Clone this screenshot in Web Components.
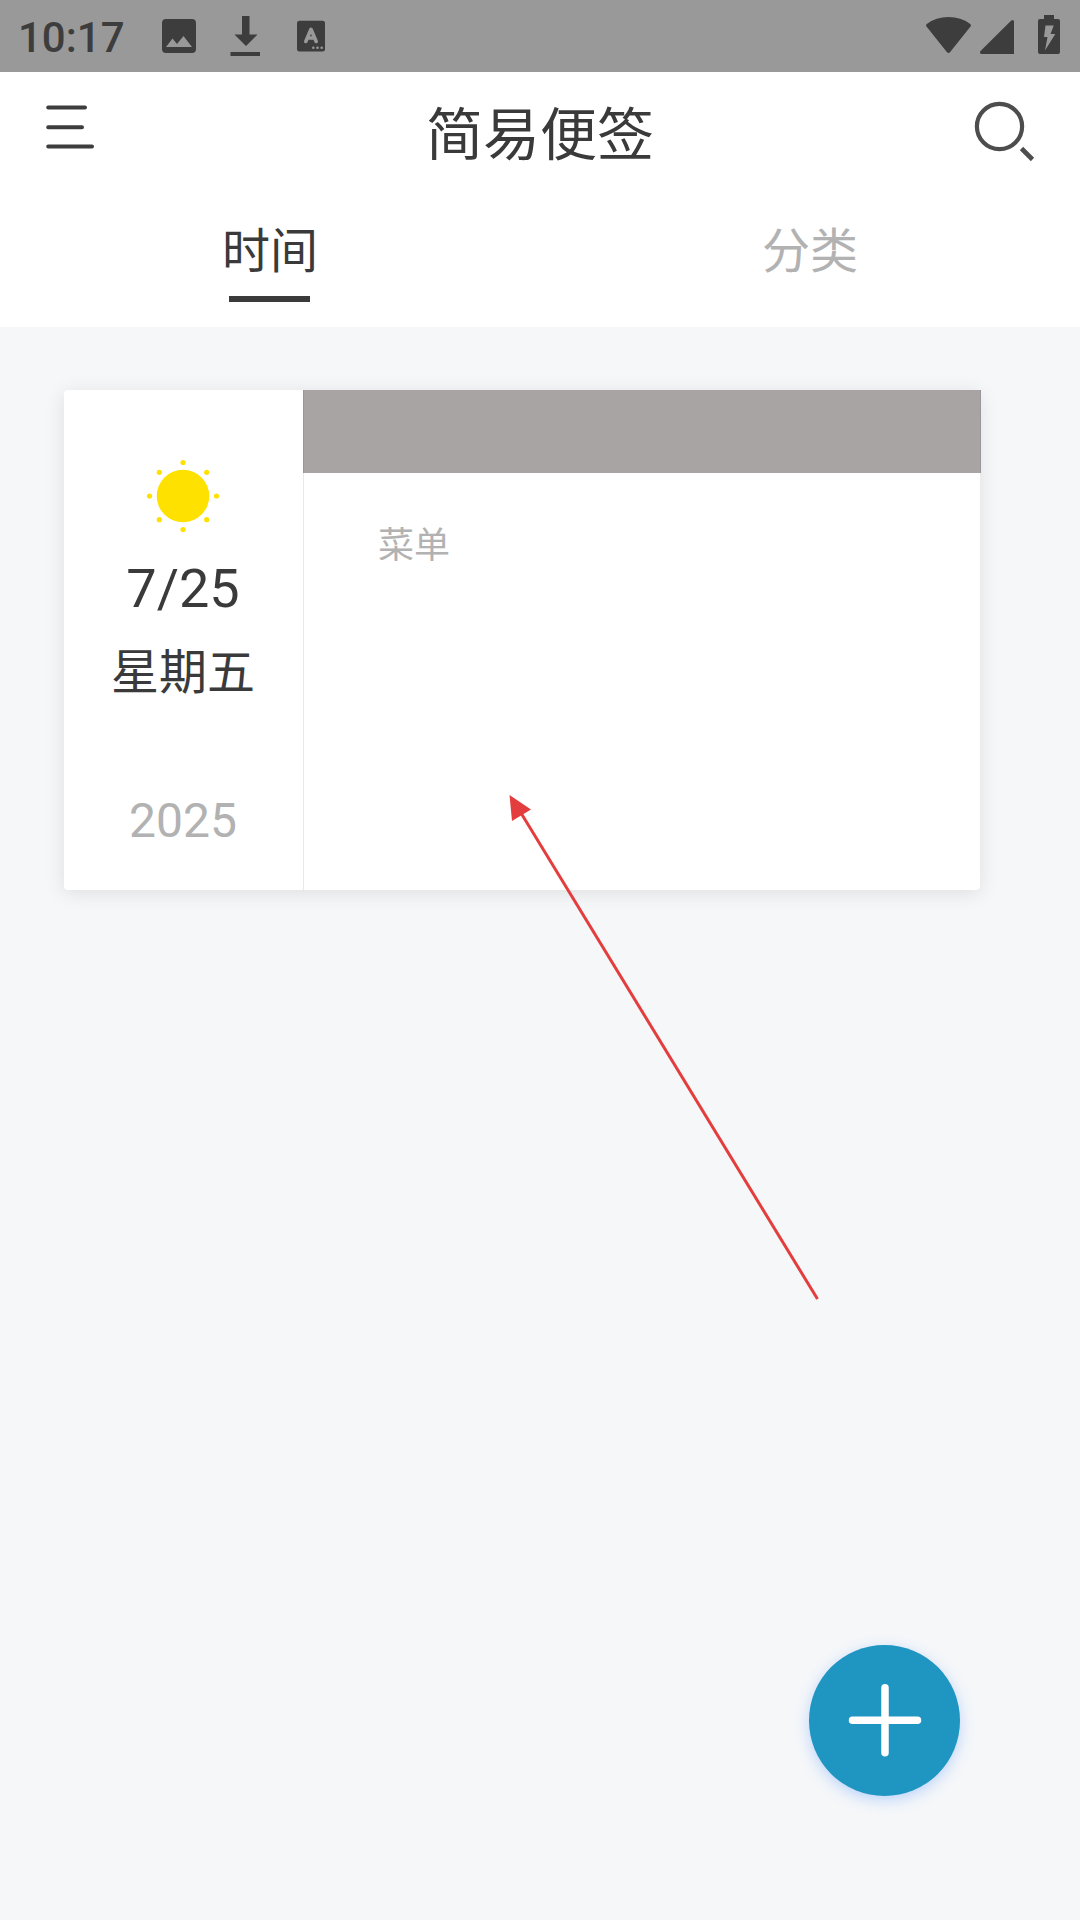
<!DOCTYPE html>
<html lang="zh-CN">
<head>
<meta charset="UTF-8">
<title>简易便签</title>
<style>
    html, body {
        margin: 0;
        padding: 0;
    }
    body {
        width: 1080px;
        height: 1920px;
        overflow: hidden;
        background: #f5f7f9;
        color: #3a3a3a;
        font-family: Roboto, 'Noto Sans CJK SC', sans-serif;
    }
</style>
</head>
<body>
<notes-app></notes-app>

<script>
class StatusBar extends HTMLElement {
    constructor() {
        super();
        this.attachShadow({ mode: 'open' });
        this.shadowRoot.innerHTML = `
        <style>
            :host {
                display: flex;
                justify-content: space-between;
                height: 72px;
                background: #999;
                color: #3d3d3d;
            }
            .left {
                display: flex;
                padding-left: 18px;
            }
            .time {
                width: 134px;
                font-size: 42px;
                font-weight: 500;
                line-height: 75px;
                white-space: nowrap;
            }
            svg {
                display: block;
                fill: #3d3d3d;
            }
        </style>
        <div class="left">
            <span class="time">${this.getAttribute('time')}</span>
            <svg width="188" height="72" viewBox="152 0 188 72">
                <path fill-rule="evenodd" d="M166 19h26a4 4 0 0 1 4 4v26a4 4 0 0 1-4 4h-26a4 4 0 0 1-4-4v-26a4 4 0 0 1 4-4zM166 47h26l-8.500-11-6.500 8-4.500-5.500z"/>
                <path d="M242 16h7.500v18.500h8L246 46l-11.500-11.500h7.500zM230.500 52h29.500v4h-29.500z"/>
                <rect x="297" y="20.700" width="28" height="30.700" rx="2.500"/>
                <path d="M305.800 41.500l5.200-12.200 5.200 12.200M307.500 38h7" fill="none" stroke="#999" stroke-width="3.600" stroke-linecap="round" stroke-linejoin="round"/>
                <g fill="#999"><circle cx="313.300" cy="47.700" r="1.300"/><circle cx="317.500" cy="47.700" r="1.300"/><circle cx="321.700" cy="47.700" r="1.300"/></g>
            </svg>
        </div>
        <svg width="160" height="72" viewBox="920 0 160 72">
            <path d="M926.500 26.500q-1.300-1.500.3-2.600Q936 17 948.500 17t21.700 6.900q1.600 1.100.3 2.600L950.200 52q-1.700 1.800-3.400 0z"/>
            <path d="M980.800 50.800l30.500-30.300q2.700-1.500 2.700 1.500v32h-32q-3.400-.2-1.200-3.200z"/>
            <path fill-rule="evenodd" d="M1044 15h10v4h4a2 2 0 0 1 2 2v31a2 2 0 0 1-2 2h-18a2 2 0 0 1-2-2v-31a2 2 0 0 1 2-2h4zM1045.500 25.500l-1.500 11.500h3.500l-2.500 13.500 10.300-16.500h-4.800l3.200-8.500z"/>
        </svg>
        `;
    }
}

class AppHeader extends HTMLElement {
    constructor() {
        super();
        this.attachShadow({ mode: 'open' });
        this.shadowRoot.innerHTML = `
        <style>
            :host {
                display: flex;
                justify-content: space-between;
                height: 120px;
                padding: 0 40px;
                background: #fff;
            }
            .title {
                font-size: 57px;
                line-height: 127px;
            }
            svg {
                display: block;
                fill: none;
                stroke: #3d3d3d;
                overflow: visible;
            }
        </style>
        <svg width="64" height="120" viewBox="40 72 64 120" stroke-width="4" stroke-linecap="round">
            <path d="M48.200 107.500h36.800M48.200 127.300h33.800M48.200 146.600h43.800"/>
        </svg>
        <span class="title"><slot></slot></span>
        <svg width="64" height="120" viewBox="976 72 64 120" stroke-width="4.200">
            <circle cx="999.500" cy="126.500" r="22.600" stroke="#4d4d4d"/>
            <path d="M1021.500 148.500l11 11" stroke="#4d4d4d" stroke-width="4.600"/>
        </svg>
        `;
    }
}

class TabItem extends HTMLElement {
    constructor() {
        super();
        this.attachShadow({ mode: 'open' });
        this.shadowRoot.innerHTML = `
        <style>
            :host {
                display: flex;
                flex: 1;
                flex-direction: column;
                align-items: center;
                color: #b2b2b2;
                font-size: 48px;
                line-height: 70px;
            }
            :host([active]) {
                color: #3a3a3a;
            }
            .line {
                width: 81px;
                height: 6px;
                margin: 9px 1px 0 0;
            }
            :host([active]) .line {
                background: #3a3a3a;
            }
        </style>
        <span><slot></slot></span>
        <div class="line"></div>
        `;
    }
}

class TabBar extends HTMLElement {
    constructor() {
        super();
        this.attachShadow({ mode: 'open' });
        this.shadowRoot.innerHTML = `
        <style>
            :host {
                display: flex;
                box-sizing: border-box;
                height: 135px;
                padding-top: 25px;
                background: #fff;
            }
        </style>
        <slot></slot>
        `;
    }
}

class NoteCard extends HTMLElement {
    constructor() {
        super();
        this.attachShadow({ mode: 'open' });
        this.shadowRoot.innerHTML = `
        <style>
            :host {
                display: flex;
                width: 916px;
                height: 500px;
                margin: 63px 0 0 64px;
                border-radius: 4px;
                background: #fff;
                box-shadow: 0 3px 20px rgba(0, 0, 0, 0.1);
            }
            .side {
                display: flex;
                box-sizing: border-box;
                flex-direction: column;
                align-items: center;
                width: 239px;
                padding-right: 1px;
            }
            .sun {
                display: block;
                margin-top: 69px;
                fill: #ffe100;
            }
            .date {
                margin-top: 24px;
                font-size: 54px;
                line-height: 64px;
            }
            .week {
                margin-top: 17px;
                font-size: 48px;
                line-height: 70px;
            }
            .year {
                margin-top: 85px;
                color: #b2b2b2;
                font-size: 48px;
                line-height: 56px;
            }
            .main {
                flex: 1;
                box-sizing: border-box;
                border-left: 1px solid #e8e8e8;
            }
            .band {
                height: 83px;
                margin: 0 -1px;
                background: #a8a4a3;
                box-shadow: inset 1px 0 #999799, inset -1px 0 #999799;
            }
            .text {
                padding: 47px 0 0 74px;
                color: #b2b2b2;
                font-size: 36px;
                line-height: 52px;
            }
        </style>
        <div class="side">
            <svg class="sun" width="74" height="74" viewBox="-37 -37 74 74">
                <circle r="26.300"/>
                <circle cy="-33.500" r="2.600"/><circle cy="33.500" r="2.600"/>
                <circle cx="-33.500" r="2.600"/><circle cx="33.500" r="2.600"/>
                <circle cx="-23.700" cy="-23.700" r="2.600"/><circle cx="23.700" cy="-23.700" r="2.600"/>
                <circle cx="-23.700" cy="23.700" r="2.600"/><circle cx="23.700" cy="23.700" r="2.600"/>
            </svg>
            <div class="date">${this.getAttribute('date')}</div>
            <div class="week">${this.getAttribute('week')}</div>
            <div class="year">${this.getAttribute('year')}</div>
        </div>
        <div class="main">
            <div class="band"></div>
            <div class="text"><slot></slot></div>
        </div>
        `;
    }
}

class PointerArrow extends HTMLElement {
    constructor() {
        super();
        this.attachShadow({ mode: 'open' });
        this.shadowRoot.innerHTML = `
        <style>
            :host {
                position: absolute;
                left: 500px;
                top: 780px;
            }
            svg {
                display: block;
            }
        </style>
        <svg width="330" height="530" viewBox="500 780 330 530">
            <path d="M521 813L817.500 1299" stroke="#e33e3d" stroke-width="3"/>
            <path d="M509.500 795l21.500 14.500-19 11.500z" fill="#e33e3d"/>
        </svg>
        `;
    }
}

class AddButton extends HTMLElement {
    constructor() {
        super();
        this.attachShadow({ mode: 'open' });
        this.shadowRoot.innerHTML = `
        <style>
            :host {
                position: absolute;
                left: 809px;
                top: 1645px;
                width: 151px;
                height: 151px;
                border-radius: 50%;
                background: #1f95c1;
                box-shadow: 0 4px 14px rgba(80, 145, 255, 0.35);
            }
            svg {
                display: block;
            }
        </style>
        <svg width="151" height="151" viewBox="0 0 151 151">
            <path d="M43.500 75.200h65M76 42.800v65" stroke="#fff" stroke-width="7.500" stroke-linecap="round"/>
        </svg>
        `;
    }
}

class NotesApp extends HTMLElement {
    constructor() {
        super();
        this.attachShadow({ mode: 'open' });
        this.shadowRoot.innerHTML = `
        <style>
            :host {
                display: block;
                position: relative;
                width: 1080px;
                height: 1920px;
                overflow: hidden;
            }
        </style>
        <status-bar time="10:17"></status-bar>
        <app-header>简易便签</app-header>
        <tab-bar>
            <tab-item active>时间</tab-item>
            <tab-item>分类</tab-item>
        </tab-bar>
        <note-card date="7/25" week="星期五" year="2025">菜单</note-card>
        <pointer-arrow></pointer-arrow>
        <add-button></add-button>
        `;
    }
}

customElements.define('status-bar', StatusBar);
customElements.define('app-header', AppHeader);
customElements.define('tab-item', TabItem);
customElements.define('tab-bar', TabBar);
customElements.define('note-card', NoteCard);
customElements.define('pointer-arrow', PointerArrow);
customElements.define('add-button', AddButton);
customElements.define('notes-app', NotesApp);
</script>
</body>
</html>
